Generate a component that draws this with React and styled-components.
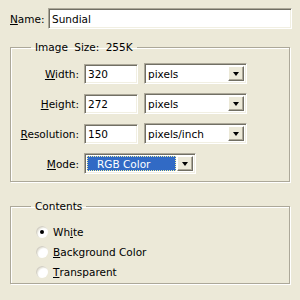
import styled, { createGlobalStyle } from "styled-components"

const Global = createGlobalStyle`
  html, body { margin: 0; padding: 0; background: #ece9d8; }
  * { box-sizing: border-box; }
`

const Dialog = styled.div`
  width: 300px;
  height: 300px;
  background: #ece9d8;
  padding: 8px 8px 0 10px;
  font-family: "DejaVu Sans", sans-serif;
  font-size: 10.5px;
  color: #000;
  display: flex;
  flex-direction: column;
`

const NameRow = styled.div`
  display: flex;
  align-items: center;
  height: 21px;
`

const NameLabel = styled.label`
  width: 38px;
`

const Key = styled.span`
  text-decoration: underline;
`

const TextBox = styled.div`
  height: ${({ h }) => h || 20}px;
  width: ${({ w }) => (w ? w + "px" : "auto")};
  flex: ${({ w }) => (w ? "0 0 auto" : "1")};
  background: #fff;
  border-top: 1px solid #aca899;
  border-left: 1px solid #aca899;
  border-right: 1px solid #fff;
  border-bottom: 1px solid #fff;
  box-shadow: inset 1px 1px 0 #716f64, inset -1px -1px 0 #f1efe2;
  padding: 0 3px;
  display: flex;
  align-items: center;
  white-space: nowrap;
`

const Group = styled.fieldset`
  margin: 0;
  padding: 0;
  width: 280px;
  height: ${({ h }) => h}px;
  margin-top: ${({ top }) => top}px;
  border: 1px solid #aca899;
  box-shadow: 1px 1px 0 #fff, inset 1px 1px 0 #fff;
`

const Legend = styled.legend`
  margin-left: ${({ off }) => off}px;
  padding: 0 4px;
  line-height: 12px;
  word-spacing: ${({ ws }) => ws || 0}px;
`

const Grid = styled.div`
  display: grid;
  grid-template-columns: 67px 54px 103px;
  column-gap: 6px;
  row-gap: 9px;
  margin-top: 10px;
  align-items: center;
`

const FieldLabel = styled.label`
  text-align: right;
  margin-right: -1px;
`

const Select = styled.div`
  height: 21px;
  grid-column: ${({ span }) => (span ? "2 / span 2" : "auto")};
  width: ${({ w }) => (w ? w + "px" : "auto")};
  background: #fff;
  border-top: 1px solid #aca899;
  border-left: 1px solid #aca899;
  border-right: 1px solid #fff;
  border-bottom: 1px solid #fff;
  box-shadow: inset 1px 1px 0 #716f64, inset -1px -1px 0 #f1efe2;
  display: flex;
  align-items: stretch;
  padding: 2px;
`

const SelectText = styled.div`
  flex: 1;
  display: flex;
  align-items: center;
  padding-left: ${({ active }) => (active ? 10 : 1)}px;
  background: ${({ active }) => (active ? "#316ac5" : "transparent")};
  color: ${({ active }) => (active ? "#fff" : "#000")};
  outline: ${({ active }) => (active ? "1px dotted #f0f0a0" : "none")};
  outline-offset: -1px;
  margin-right: 1px;
  white-space: nowrap;
`

const DropButton = styled.div`
  width: 16px;
  background: #ece9d8;
  border-top: 1px solid #fff;
  border-left: 1px solid #fff;
  border-right: 1px solid #716f64;
  border-bottom: 1px solid #716f64;
  box-shadow: inset -1px -1px 0 #aca899;
  display: flex;
  align-items: center;
  justify-content: center;
  &::after {
    content: "";
    border-left: 3.5px solid transparent;
    border-right: 3.5px solid transparent;
    border-top: 4px solid #000;
    margin-top: 1px;
  }
`

const Radios = styled.div`
  display: flex;
  flex-direction: column;
  gap: 7px;
  margin-top: 13px;
  margin-left: 25px;
`

const RadioRow = styled.div`
  display: flex;
  align-items: center;
  height: 13px;
`

const RadioDot = styled.span`
  width: 12px;
  height: 12px;
  border-radius: 50%;
  background: #fff;
  box-shadow: inset 1px 1px 0 #d4d0c4, inset 2px 2px 1px #ebe9e0;
  margin-right: 5px;
  display: flex;
  align-items: center;
  justify-content: center;
  &::after {
    content: "";
    width: 4px;
    height: 4px;
    border-radius: 50%;
    background: ${({ on }) => (on ? "#000" : "transparent")};
  }
`

export default function App() {
  return (
    <>
      <Global />
      <Dialog>
        <NameRow>
          <NameLabel><Key>N</Key>ame:</NameLabel>
          <TextBox h={21}>Sundial</TextBox>
        </NameRow>

        <Group top={12} h={141}>
          <Legend off={20} ws={3}>Image Size: 255K</Legend>
          <Grid>
            <FieldLabel><Key>W</Key>idth:</FieldLabel>
            <TextBox w={54}>320</TextBox>
            <Select><SelectText>pixels</SelectText><DropButton /></Select>

            <FieldLabel><Key>H</Key>eight:</FieldLabel>
            <TextBox w={54}>272</TextBox>
            <Select><SelectText>pixels</SelectText><DropButton /></Select>

            <FieldLabel><Key>R</Key>esolution:</FieldLabel>
            <TextBox w={54}>150</TextBox>
            <Select><SelectText>pixels/inch</SelectText><DropButton /></Select>

            <FieldLabel><Key>M</Key>ode:</FieldLabel>
            <Select span w={112}><SelectText active>RGB Color</SelectText><DropButton /></Select>
          </Grid>
        </Group>

        <Group top={18} h={84}>
          <Legend off={20}>Contents</Legend>
          <Radios>
            <RadioRow><RadioDot on />Wh<Key>i</Key>te</RadioRow>
            <RadioRow><RadioDot /><Key>B</Key>ackground Color</RadioRow>
            <RadioRow><RadioDot /><Key>T</Key>ransparent</RadioRow>
          </Radios>
        </Group>
      </Dialog>
    </>
  )
}
